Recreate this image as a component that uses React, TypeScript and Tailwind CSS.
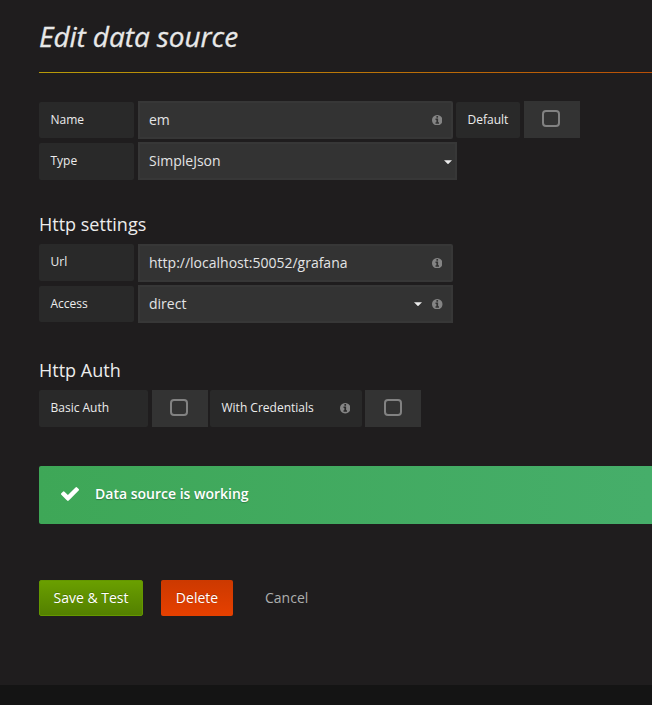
import React from "react";

function InfoIcon({ className = "" }: { className?: string }) {
  return (
    <svg viewBox="128 128 1536 1536" className={`h-[10.5px] w-[10.5px] shrink-0 fill-[#848484] ${className}`}>
      <path d="M1152 1376v-160q0-14-9-23t-23-9h-96v-512q0-14-9-23t-23-9h-320q-14 0-23 9t-9 23v160q0 14 9 23t23 9h96v320h-96q-14 0-23 9t-9 23v160q0 14 9 23t23 9h448q14 0 23-9t9-23zm-128-896v-160q0-14-9-23t-23-9h-192q-14 0-23 9t-9 23v160q0 14 9 23t23 9h192q14 0 23-9t9-23zm640 416q0 209-103 385.5t-279.5 279.5-385.5 103-385.5-103-279.5-279.5-103-385.5 103-385.5 279.5-279.5 385.5-103 385.5 103 279.5 279.5 103 385.5z" />
    </svg>
  );
}

function CheckIcon() {
  return (
    <svg viewBox="121 334 1550 1188" className="h-[14px] w-[18px] shrink-0 fill-white">
      <path d="M1671 566q0 40-28 68l-724 724-136 136q-28 28-68 28t-68-28l-136-136-362-362q-28-28-28-68t28-68l136-136q28-28 68-28t68 28l294 295 656-657q28-28 68-28t68 28l136 136q28 28 28 68z" />
    </svg>
  );
}

function Caret({ className = "" }: { className?: string }) {
  return (
    <svg viewBox="0 0 8 4" className={`h-[4.5px] w-[8px] shrink-0 fill-[#ececec] ${className}`}>
      <path d="M0 0h8L4 4z" />
    </svg>
  );
}

function Label({ children, className = "" }: { children: React.ReactNode; className?: string }) {
  return (
    <div className={`flex shrink-0 items-center rounded-[2px] bg-[#292929] pl-[11.5px] text-[12px] leading-[18px] text-[#ececec] ${className}`}>
      {children}
    </div>
  );
}

function Field({ children, className = "" }: { children: React.ReactNode; className?: string }) {
  return (
    <div className={`flex h-[38px] shrink-0 items-center border-2 border-[#373737] bg-[#333333] pl-[9px] text-[14px] leading-[20px] text-[#e3e4e5] ${className}`}>
      {children}
    </div>
  );
}

function Toggle({ className = "" }: { className?: string }) {
  return (
    <div className={`flex h-[37px] w-[56px] shrink-0 bg-[#333333] pt-[9px] ${className}`}>
      <span className="h-[17px] w-[18px] rounded-[4px] border-2 border-[#828282]" />
    </div>
  );
}

export default function App() {
  return (
    <div className="flex h-[705px] w-[652px] flex-col overflow-hidden bg-[#141414] font-['Open_Sans','Noto_Sans',sans-serif]">
      <main className="h-[685px] bg-[#1f1d1e] pl-[39px]">
        <h1 className="h-[72px] pt-[16px] text-[28px] leading-[40px] tracking-[-0.07px] text-[#e8e8e8] italic [-webkit-text-stroke:0.3px_currentColor]">Edit data source</h1>
        <div className="h-px bg-linear-to-r from-[#b79b09] to-[#b94f07]" />

        <div className="mt-[28px] flex h-[38px]">
          <Label className="mt-px h-[36px] w-[95px]">Name</Label>
          <Field className="ml-[4px] w-[315px] rounded-r-[2px]">
            em
            <InfoIcon className="mr-[9px] ml-auto" />
          </Field>
          <Label className="mt-px ml-[3px] h-[36px] w-[64px]">Default</Label>
          <Toggle className="ml-[4px] pl-[18px]" />
        </div>
        <div className="mt-[3px] flex h-[38px]">
          <Label className="mt-px h-[37px] w-[95px] pb-px">Type</Label>
          <Field className="ml-[4px] w-[319px]">
            SimpleJson
            <Caret className="mt-[2px] mr-[3px] ml-auto" />
          </Field>
        </div>

        <h2 className="mt-[32px] h-[32px] text-[18px] leading-[24px] text-[#ececec]">Http settings</h2>
        <div className="flex h-[38px]">
          <Label className="h-[37px] w-[95px] pb-[2px]">Url</Label>
          <Field className="ml-[4px] w-[315px] rounded-r-[2px]">
            http://localhost:50052/grafana
            <InfoIcon className="mr-[9px] ml-auto" />
          </Field>
        </div>
        <div className="mt-[3px] flex h-[38px]">
          <Label className="mt-px h-[36px] w-[95px]">Access</Label>
          <Field className="ml-[4px] w-[315px]">
            direct
            <Caret className="ml-auto" />
            <InfoIcon className="mr-[8.5px] ml-[10.5px]" />
          </Field>
        </div>

        <h2 className="mt-[35px] h-[32px] text-[18px] leading-[24px] text-[#ececec]">Http Auth</h2>
        <div className="flex h-[37px]">
          <Label className="h-[37px] w-[109px] pb-px">Basic Auth</Label>
          <Toggle className="ml-[4px] pl-[18px]" />
          <Label className="ml-[2px] h-[37px] w-[152px] pb-px">
            With Credentials
            <InfoIcon className="mt-px mr-[12px] ml-auto" />
          </Label>
          <Toggle className="ml-[3px] pl-[19px]" />
        </div>

        <div className="mt-[39px] flex h-[58px] items-center rounded-l-[2px] bg-linear-to-r from-[#3ea757] to-[#46ae6a] pb-[2px] pl-[22px] text-[14px] leading-[20px] font-semibold text-white [text-shadow:0_1px_1px_rgba(0,0,0,0.25)]">
          <CheckIcon />
          <span className="ml-[16px]">Data source is working</span>
        </div>

        <div className="mt-[56px] flex h-[36px] items-center text-[14px] leading-[20px]">
          <button className="h-[36px] w-[104px] rounded-[2px] border border-[#649700] bg-linear-to-b from-[#6a9f00] to-[#538000] text-white [text-shadow:0_-1px_0_rgba(0,0,0,0.2)]">Save &amp; Test</button>
          <button className="ml-[18px] h-[36px] w-[72px] rounded-[2px] bg-linear-to-b from-[#cc3900] to-[#e64000] text-white [text-shadow:0_-1px_0_rgba(0,0,0,0.2)]">Delete</button>
          <button className="ml-[32px] text-[#adafae]">Cancel</button>
        </div>
      </main>
    </div>
  );
}
